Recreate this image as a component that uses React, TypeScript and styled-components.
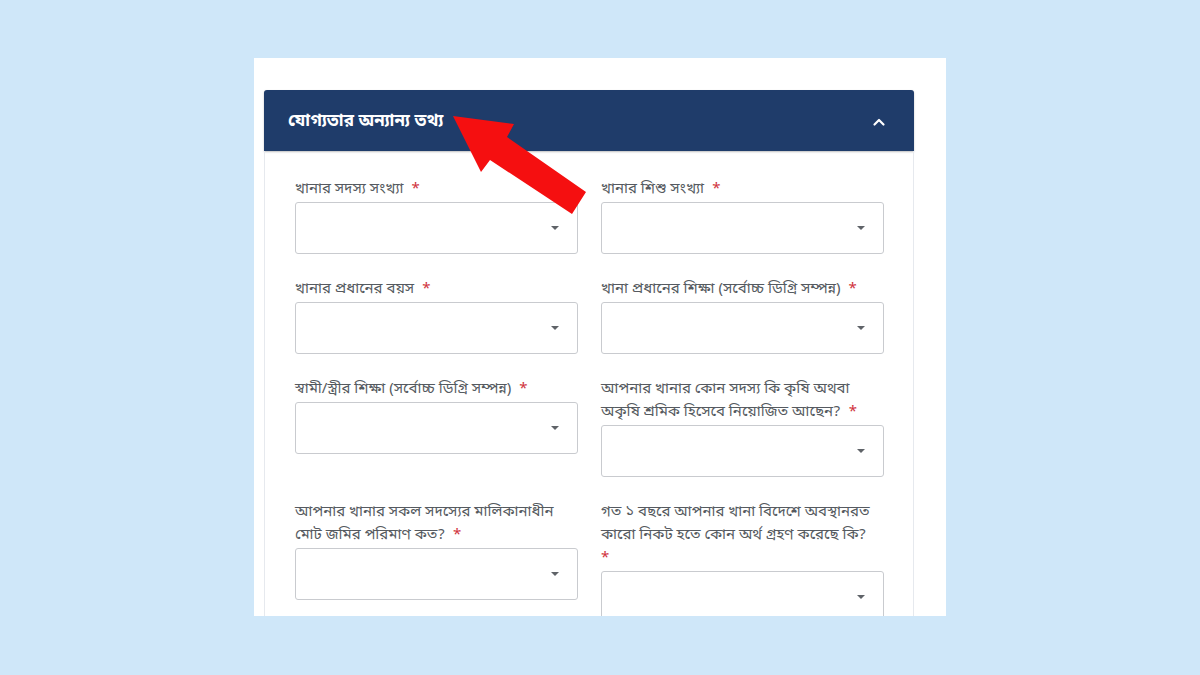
import React from "react";
import styled, { createGlobalStyle } from "styled-components";

const GlobalStyle = createGlobalStyle`
  html, body {
    margin: 0;
    padding: 0;
    background: #cfe7f9;
  }
  body {
    font-family: "Noto Sans Bengali", "Noto Sans", "Liberation Sans", sans-serif;
  }
`;

const Stage = styled.div`
  position: relative;
  width: 1200px;
  height: 675px;
  background: #cfe7f9;
  overflow: hidden;
  display: flex;
  justify-content: center;
  padding-top: 58px;
  box-sizing: border-box;
`;

const Panel = styled.div`
  width: 692px;
  height: 558px;
  background: #ffffff;
  box-sizing: border-box;
  padding: 32px 32px 0 10px;
  overflow: hidden;
`;

const Header = styled.div`
  height: 61px;
  background: #1f3c6a;
  border-radius: 3px 3px 0 0;
  display: flex;
  align-items: center;
  justify-content: space-between;
  padding: 2px 28px 0 24px;
  box-sizing: border-box;
  color: #ffffff;
  box-shadow: 0 1px 2px rgba(0, 0, 0, 0.25);
`;

const Title = styled.span`
  font-size: 17px;
  font-weight: 700;
  letter-spacing: 0.1px;
`;

const Body = styled.div`
  border-left: 1px solid #e6e9ee;
  border-right: 1px solid #e6e9ee;
  padding: 27px 30px 30px 30px;
  display: grid;
  grid-template-columns: 283px 283px;
  column-gap: 23px;
  row-gap: 24px;
  align-items: start;
`;

const Field = styled.div`
  display: flex;
  flex-direction: column;
`;

const Label = styled.label`
  font-size: 15px;
  line-height: 23px;
  color: #555a60;
  margin-bottom: 1px;
  white-space: nowrap;
`;

const Star = styled.span<{ $newLine?: boolean }>`
  color: #d0323c;
  margin-left: ${(p) => (p.$newLine ? "0" : "8px")};
`;

const SelectBox = styled.div`
  height: 52px;
  border: 1px solid #c9cbcf;
  border-radius: 3px;
  box-sizing: border-box;
  display: flex;
  align-items: center;
  justify-content: flex-end;
  padding-right: 18px;
  background: #ffffff;
`;

const Caret = styled.span`
  width: 0;
  height: 0;
  border-left: 4px solid transparent;
  border-right: 4px solid transparent;
  border-top: 4px solid #5f6368;
`;

const ArrowOverlay = styled.svg`
  position: absolute;
  left: 0;
  top: 0;
  pointer-events: none;
`;

const ChevronUp = () => (
  <svg width="14" height="10" viewBox="0 0 14 10">
    <path d="M2.5 7.5 L7 3 L11.5 7.5" fill="none" stroke="#ffffff" strokeWidth="2.2" strokeLinecap="round" strokeLinejoin="round" />
  </svg>
);

const fields: { label: React.ReactNode; starBreak?: boolean }[] = [
  { label: "খানার সদস্য সংখ্যা" },
  { label: "খানার শিশু সংখ্যা" },
  { label: "খানার প্রধানের বয়স" },
  { label: "খানা প্রধানের শিক্ষা (সর্বোচ্চ ডিগ্রি সম্পন্ন)" },
  { label: "স্বামী/স্ত্রীর শিক্ষা (সর্বোচ্চ ডিগ্রি সম্পন্ন)" },
  { label: <>আপনার খানার কোন সদস্য কি কৃষি অথবা<br />অকৃষি শ্রমিক হিসেবে নিয়োজিত আছেন?</> },
  { label: <>আপনার খানার সকল সদস্যের মালিকানাধীন<br />মোট জমির পরিমাণ কত?</> },
  { label: <>গত ১ বছরে আপনার খানা বিদেশে অবস্থানরত<br />কারো নিকট হতে কোন অর্থ গ্রহণ করেছে কি?</>, starBreak: true },
];

export default function App() {
  return (
    <>
      <GlobalStyle />
      <Stage>
        <Panel>
          <Header>
            <Title>যোগ্যতার অন্যান্য তথ্য</Title>
            <ChevronUp />
          </Header>
          <Body>
            {fields.map((f, i) => (
              <Field key={i}>
                <Label>
                  {f.label}
                  {f.starBreak && <br />}
                  <Star $newLine={f.starBreak}>*</Star>
                </Label>
                <SelectBox>
                  <Caret />
                </SelectBox>
              </Field>
            ))}
          </Body>
        </Panel>
        <ArrowOverlay width="1200" height="675" viewBox="0 0 1200 675">
          <polygon
            points="453,116 514,124 507,137 586,192 572,214 490,160 481,172"
            fill="#f50f10"
          />
        </ArrowOverlay>
      </Stage>
    </>
  );
}
